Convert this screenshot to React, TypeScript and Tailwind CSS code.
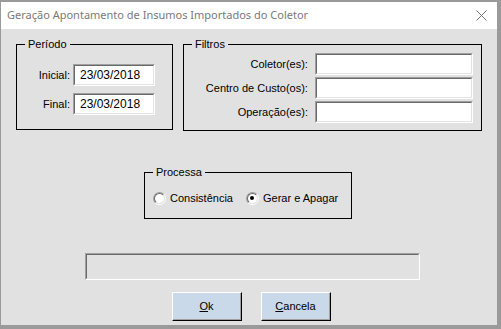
import React from 'react';

const ui = { fontFamily: '"Liberation Sans", Arial, sans-serif' };

function Sunken({ className = '', children }: { className?: string; children?: React.ReactNode }) {
  return (
    <div className={`border-t border-l border-t-[#a0a0a0] border-l-[#a0a0a0] border-b border-r border-b-white border-r-white ${className}`}>
      <div className="w-full h-full border-t border-l border-t-[#696969] border-l-[#696969] border-b border-r border-b-[#e3e3e3] border-r-[#e3e3e3] bg-white flex items-center">
        {children}
      </div>
    </div>
  );
}

function Group({ title, className = '', children }: { title: string; className?: string; children?: React.ReactNode }) {
  return (
    <div className={`relative border border-black ${className}`}>
      <span className="absolute left-[8px] -top-[7px] px-[3px] bg-[#e1e1e1] text-[11px] leading-[13px] text-black">{title}</span>
      {children}
    </div>
  );
}

function Radio({ checked, label }: { checked?: boolean; label: string }) {
  return (
    <div className="flex items-center gap-[4px]">
      <div className="w-[13px] h-[13px] rounded-full border-t border-l border-t-[#a0a0a0] border-l-[#a0a0a0] border-b border-r border-b-white border-r-white">
        <div className="w-full h-full rounded-full border-t border-l border-t-[#696969] border-l-[#696969] border-b border-r border-b-[#e3e3e3] border-r-[#e3e3e3] bg-white flex items-center justify-center">
          {checked && <div className="w-[4px] h-[4px] rounded-full bg-black" />}
        </div>
      </div>
      <span className="text-[11px] text-black">{label}</span>
    </div>
  );
}

function Button({ children }: { children: React.ReactNode }) {
  return (
    <div className="w-[70px] h-[29px] border-t border-l border-t-white border-l-white border-b border-r border-b-black border-r-black">
      <div className="w-full h-full border-b border-r border-b-[#a0a0a0] border-r-[#a0a0a0] bg-[#c9d9e9] flex items-center justify-center text-[11px] text-black">
        {children}
      </div>
    </div>
  );
}

export default function App() {
  return (
    <div className="w-[501px] h-[329px] flex flex-col bg-[#e1e1e1] border-t-2 border-l border-r-4 border-b-4 border-[#9a9a9a]" style={ui}>
      {/* Title bar */}
      <div className="h-[27px] bg-white flex items-center justify-between pl-[6px] pr-[10px] shrink-0">
        <span className="text-[11px] text-[#7a7a7a]" style={{ fontFamily: '"Noto Sans", "Open Sans", sans-serif' }}>
          Geração Apontamento de Insumos Importados do Coletor
        </span>
        <svg width="11" height="11" viewBox="0 0 11 11">
          <path d="M0.5 0.5 L10.5 10.5 M10.5 0.5 L0.5 10.5" stroke="#707070" strokeWidth="1" />
        </svg>
      </div>

      {/* Body */}
      <div className="flex-1 flex flex-col pt-[15px] px-[15px]">
        <div className="flex gap-[10px] items-start">
          <Group title="Período" className="w-[159px] h-[86px] pt-[19px]">
            <div className="flex flex-col gap-[7px]">
              <div className="flex items-center gap-[3px]">
                <span className="w-[53px] text-right text-[11px]">Inicial:</span>
                <Sunken className="w-[82px] h-[22px]">
                  <span className="pl-[5px] text-[12px]">23/03/2018</span>
                </Sunken>
              </div>
              <div className="flex items-center gap-[3px]">
                <span className="w-[53px] text-right text-[11px]">Final:</span>
                <Sunken className="w-[82px] h-[22px]">
                  <span className="pl-[5px] text-[12px]">23/03/2018</span>
                </Sunken>
              </div>
            </div>
          </Group>

          <Group title="Filtros" className="w-[303px] h-[87px] pt-[8px]">
            <div className="flex flex-col gap-[2px]">
              {['Coletor(es):', 'Centro de Custo(os):', 'Operação(es):'].map((l) => (
                <div key={l} className="flex items-center gap-[7px]">
                  <span className="w-[124px] text-right text-[11px]">{l}</span>
                  <Sunken className="w-[158px] h-[22px]" />
                </div>
              ))}
            </div>
          </Group>
        </div>

        <Group title="Processa" className="ml-[128px] mt-[41px] w-[208px] h-[47px] flex items-start pt-[17px] pl-[8px] gap-[13px]">
          <Radio label="Consistência" />
          <Radio checked label="Gerar e Apagar" />
        </Group>

        <div className="ml-[69px] mt-[34px] w-[335px] h-[27px] border-t border-l border-t-[#a0a0a0] border-l-[#a0a0a0] border-b border-r border-b-white border-r-white">
          <div className="w-full h-full border-t border-l border-t-[#696969] border-l-[#696969] border-b border-r border-b-[#e3e3e3] border-r-[#e3e3e3]" />
        </div>

        <div className="ml-[156px] mt-[12px] flex gap-[19px]">
          <Button>
            <span><span className="underline">O</span>k</span>
          </Button>
          <Button>
            <span><span className="underline">C</span>ancela</span>
          </Button>
        </div>
      </div>
    </div>
  );
}
